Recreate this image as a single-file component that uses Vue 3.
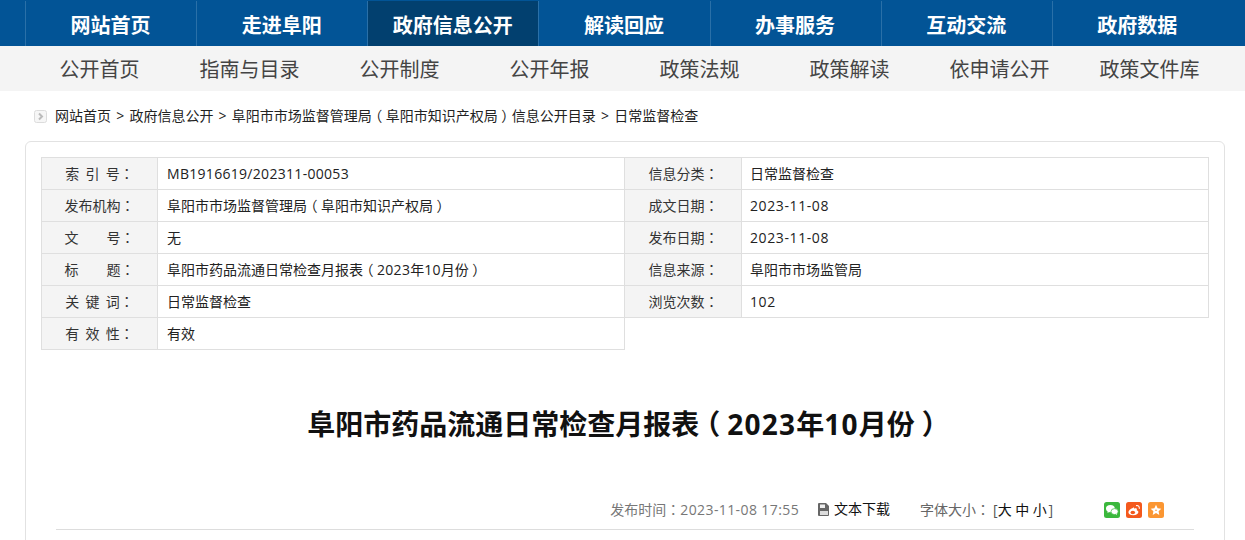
<script setup>
const mainNav = ['网站首页', '走进阜阳', '政府信息公开', '解读回应', '办事服务', '互动交流', '政府数据']
const subNav = ['公开首页', '指南与目录', '公开制度', '公开年报', '政策法规', '政策解读', '依申请公开', '政策文件库']
const crumbs = ['网站首页', '政府信息公开', '阜阳市市场监督管理局（阜阳市知识产权局）信息公开目录', '日常监督检查']
const rows = [
  ['索 引 号：', 'MB1916619/202311-00053', '信息分类：', '日常监督检查'],
  ['发布机构：', '阜阳市市场监督管理局（阜阳市知识产权局）', '成文日期：', '2023-11-08'],
  ['文　　号：', '无', '发布日期：', '2023-11-08'],
  ['标　　题：', '阜阳市药品流通日常检查月报表（2023年10月份）', '信息来源：', '阜阳市市场监管局'],
  ['关 键 词：', '日常监督检查', '浏览次数：', '102'],
  ['有 效 性：', '有效'],
]
const pieces = (s) =>
  s.split(/([（）：]|[A-Za-z0-9][A-Za-z0-9/\-:. ]*)/).filter(Boolean).map((t) => ({
    t,
    c: t === '（' || t === '）' ? 'paren' : t === '：' ? 'col' : /^[A-Za-z0-9]/.test(t) ? 'latin' : '',
  }))
</script>

<template>
  <div class="page">
    <nav class="main-nav">
      <a v-for="(n, i) in mainNav" :key="n" class="main-item" :class="{ active: i === 2 }">{{ n }}</a>
    </nav>
    <nav class="sub-bar">
      <div class="sub-nav">
        <a v-for="n in subNav" :key="n" class="sub-item">{{ n }}</a>
      </div>
    </nav>
    <div class="crumbs">
      <svg class="crumb-icon" width="13" height="13" viewBox="0 0 13 13">
        <rect x=".5" y=".5" width="12" height="12" rx="2" fill="#f6f6f6" stroke="#dcdcdc" />
        <path d="M5 3.5 8 6.5 5 9.5" fill="none" stroke="#bbb" stroke-width="2" />
      </svg>
      <template v-for="(c, i) in crumbs" :key="c">
        <span v-if="i" class="sep">&gt;</span>
        <a><span v-for="(p, k) in pieces(c)" :key="k" :class="p.c">{{ p.t }}</span></a>
      </template>
    </div>
    <section class="card">
      <table class="info">
        <colgroup><col class="c1" /><col class="c2" /><col class="c1b" /><col /></colgroup>
        <tbody>
          <tr v-for="r in rows" :key="r[0]">
            <th><span v-for="(p, k) in pieces(r[0])" :key="k" :class="p.c">{{ p.t }}</span></th>
            <td><span v-for="(p, k) in pieces(r[1])" :key="k" :class="p.c">{{ p.t }}</span></td>
            <template v-if="r[2]">
              <th><span v-for="(p, k) in pieces(r[2])" :key="k" :class="p.c">{{ p.t }}</span></th>
              <td><span v-for="(p, k) in pieces(r[3])" :key="k" :class="p.c">{{ p.t }}</span></td>
            </template>
          </tr>
        </tbody>
      </table>
      <h1 class="title"><span v-for="(p, k) in pieces('阜阳市药品流通日常检查月报表（2023年10月份）')" :key="k" :class="p.c">{{ p.t }}</span></h1>
      <div class="meta">
        <span class="time">发布时间<span class="col">：</span><span class="latin">2023-11-08 17:55</span></span>
        <a class="dl">
          <svg width="12" height="13" viewBox="0 0 12 13">
            <path d="M1 0h7l3 3v9a1 1 0 0 1-1 1H1a1 1 0 0 1-1-1V1a1 1 0 0 1 1-1z" fill="#666" />
            <path d="M2 1.500h5v3.500H2z" fill="#eee" />
            <path d="M2 8h8v4H2z" fill="#ddd" />
          </svg>
          文本下载
        </a>
        <span class="size"><span class="size-label">字体大小<span class="col">：</span></span>[<a>大</a><a>中</a><a>小</a>]</span>
        <span class="share">
          <svg width="16" height="16" viewBox="0 0 16 16">
            <rect width="16" height="16" rx="2.500" fill="#3bb83d" />
            <ellipse cx="6.400" cy="6.600" rx="4.400" ry="3.600" fill="#fff" />
            <path d="M4 9l-.6 2 2.400-1.200z" fill="#fff" />
            <ellipse cx="10.600" cy="9.600" rx="3.600" ry="3" fill="#fff" stroke="#3bb83d" stroke-width=".7" />
            <path d="M12 12l1 1.200-.1-2z" fill="#fff" />
          </svg>
          <svg width="16" height="16" viewBox="0 0 16 16">
            <rect width="16" height="16" rx="2.500" fill="#f4591d" />
            <path d="M6.800 6C4.500 6.800 2.400 8.600 2.400 10.300c0 1.700 2.200 3 4.800 3 3 0 5.200-1.600 5.200-3.200 0-1.300-1.400-1.600-1.700-1.800.5-1.300 0-2-1-2.100-.8 0-1.700.3-1.700.3.300-.9-.1-1.300-1.200-.5z" fill="#fff" />
            <ellipse cx="6.800" cy="10.500" rx="2.300" ry="1.700" fill="#f4591d" />
            <path d="M10.500 3.600c1.700-.3 3 1 2.800 2.800" fill="none" stroke="#fff" stroke-width="1.100" stroke-linecap="round" />
          </svg>
          <svg width="16" height="16" viewBox="0 0 16 16">
            <rect width="16" height="16" rx="2.500" fill="#fb9632" />
            <path d="M8 2.800l1.600 3.400 3.700.5-2.700 2.500.7 3.700L8 11.100l-3.300 1.800.7-3.700-2.700-2.500 3.700-.5z" fill="#fff" />
            <circle cx="8" cy="8.200" r=".8" fill="#fb9632" />
          </svg>
        </span>
      </div>
    </section>
  </div>
</template>

<style>
html, body { margin: 0; background: #fff; overflow: hidden; }
</style>

<style scoped>
.page {
  width: 1245px;
  height: 540px;
  overflow: hidden;
  font-family: "Open Sans", "Noto Sans CJK SC", sans-serif;
  color: #333;
}
.paren { font-feature-settings: "halt"; padding: 0 0.25em; }
.col { font-family: "Noto Sans CJK TC", sans-serif; }
.latin { letter-spacing: 0.4px; }
.main-nav {
  height: 46px;
  box-sizing: border-box;
  padding-top: 1px;
  padding-left: 25px;
  display: flex;
  background: #025496;
}
.main-item {
  flex: 0 0 171.14px;
  box-sizing: border-box;
  border-left: 1px solid #2a70a8;
  padding-right: 1px;
  text-align: center;
  color: #fff;
  font-size: 20px;
  font-weight: 700;
  line-height: 49px;
}
.main-item.active { background: #02406f; }
.sub-bar { height: 45px; background: #f4f4f4; }
.sub-nav { margin-left: 24.500px; display: flex; }
.sub-item {
  flex: 0 0 150px;
  text-align: center;
  font-size: 20px;
  line-height: 48px;
  color: #444;
}
.crumbs {
  margin-left: 34px;
  height: 50px;
  display: flex;
  align-items: center;
  font-size: 14px;
  line-height: 20px;
  color: #222;
  white-space: nowrap;
}
.crumb-icon { margin-right: 8px; }
.sep { margin: 0 5.200px; }
.card {
  margin: 0 20px 0 25px;
  height: 420px;
  box-sizing: border-box;
  border: 1px solid #e2e2e2;
  border-radius: 6px;
  padding: 15px;
}
.info {
  width: 1168px;
  table-layout: fixed;
  border-collapse: collapse;
  font-size: 14px;
}
.c1 { width: 116px; }
.c2 { width: 467px; }
.c1b { width: 117px; }
.info tr { height: 32px; }
.info th, .info td {
  border: 1px solid #dfdfdf;
  padding: 0;
  white-space: nowrap;
  height: 31px;
  line-height: 30px;
}
.info th {
  background: #f4f4f4;
  font-weight: 400;
  text-align: center;
  white-space: pre;
  word-spacing: 2.500px;
}
.info th:nth-child(3) { padding-left: 1px; }
.info td { padding-left: 9px; color: #222; }
.info td:nth-child(2) .latin { letter-spacing: 0.3px; }
.info td:nth-child(4) { padding-left: 8px; }
.info td:nth-child(4) .latin { letter-spacing: 0.6px; }
.title {
  margin: 46px 0 0;
  text-align: center;
  font-size: 28px;
  font-weight: 700;
  line-height: 56px;
  color: #111;
}
.title .latin { letter-spacing: 1.200px; }
.meta {
  margin: 47px 15px 0;
  padding-right: 30px;
  height: 31px;
  box-sizing: border-box;
  border-bottom: 1px solid #ddd;
  display: flex;
  justify-content: flex-end;
  align-items: flex-start;
  font-size: 14px;
  line-height: 20px;
  white-space: nowrap;
}
.time { color: #777; }
.dl { margin-left: 19px; color: #111; display: flex; align-items: center; gap: 4px; }
.size { margin-left: 30px; color: #555; }
.size-label { color: #666; margin-right: 3px; }
.size a { color: #111; margin: 0 1.750px; }
.size a:first-of-type { margin-left: 0; }
.share { margin-left: 51px; display: flex; gap: 6px; padding-top: 3px; }
</style>
